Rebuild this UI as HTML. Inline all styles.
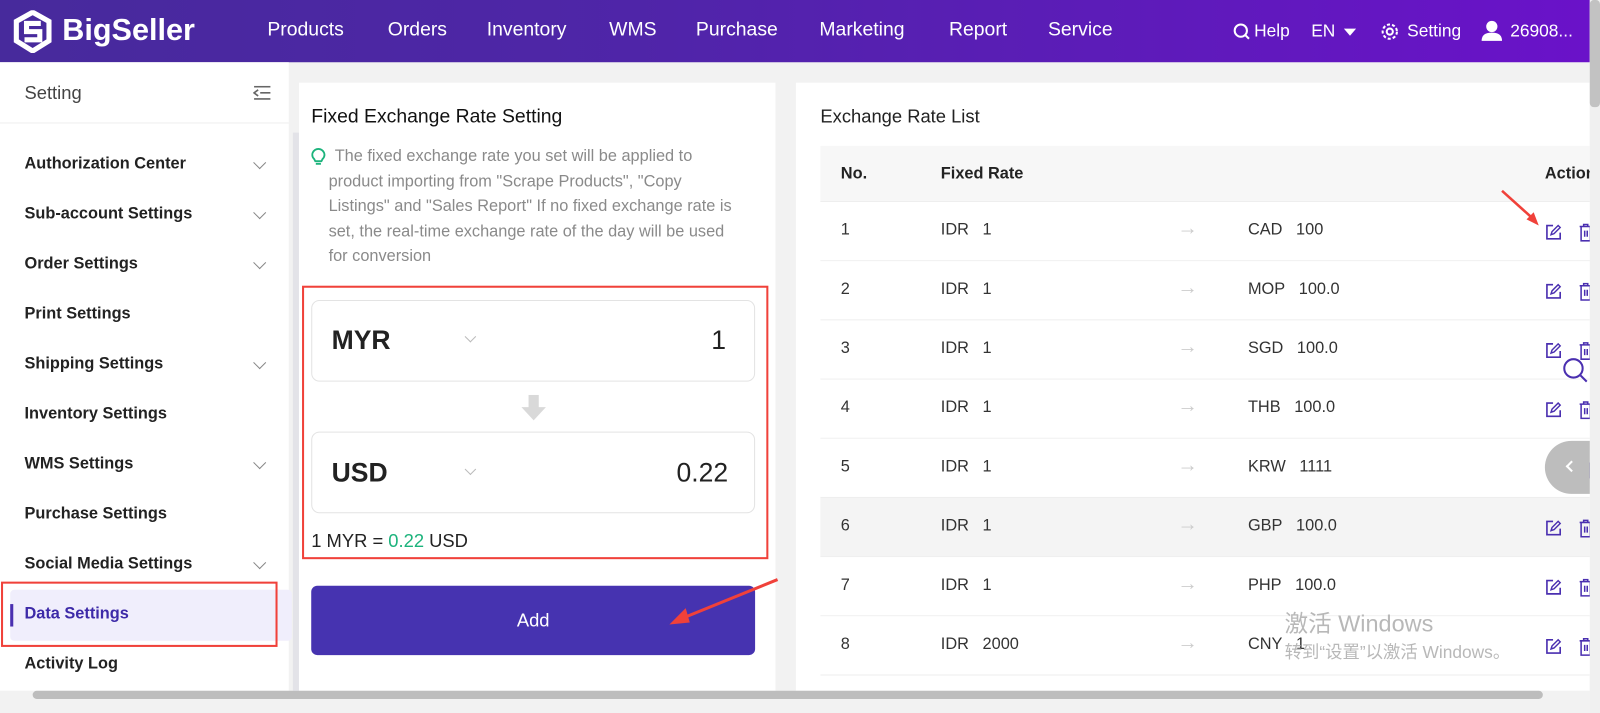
<!DOCTYPE html>
<html><head><meta charset="utf-8"><style>
*{box-sizing:border-box;margin:0;padding:0}
body{width:1600px;height:699px;overflow:hidden;background:#f2f2f2;font-family:"Liberation Sans","Noto Sans CJK SC",sans-serif;position:relative;color:#222}
#w{position:absolute;left:0;top:0;width:1568px;height:685px;transform:scale(1.0204);transform-origin:0 0}
.hdr{position:absolute;left:0;top:0;width:1558px;height:61px;background:linear-gradient(90deg,#472a9c 0%,#4f25a8 40%,#6a12c9 100%);color:#fff}
.hdr .nav{position:absolute;top:19px;font-size:19px}
.abs{position:absolute}
.side{position:absolute;left:0;top:61px;width:283px;height:616px;background:#fff}
.side .it{position:absolute;left:24px;font-size:16px;font-weight:bold;color:#222}
.chev{position:absolute;left:250px;width:9px;height:9px;border-right:1.5px solid #888;border-bottom:1.5px solid #888;transform:rotate(45deg)}
.mid{position:absolute;left:293px;top:81px;width:467px;height:596px;background:#fff}
.right{position:absolute;left:780px;top:81px;width:778px;height:596px;background:#fff}
.row{position:absolute;left:24px;width:754px;height:58px;border-bottom:1px solid #eee;font-size:16px;color:#333}
.row span{position:absolute;top:19px}
.ed{position:absolute;left:710px;top:21px}
.red{border:2px solid #f0413a;position:absolute}
</style></head><body><div id="w">
<div class="hdr">
 <svg class="abs" style="left:12px;top:10px" width="40" height="42" viewBox="0 0 40 42"><path d="M20 2 L36 11 L36 30 L20 40 L4 30 L4 11 Z" fill="none" stroke="#fff" stroke-width="5"/><path d="M28 13 L14 13 L14 21 L27 21 L27 29 L12 29" fill="none" stroke="#fff" stroke-width="5"/></svg>
 <div class="abs" style="left:61px;top:13px;font-size:30px;font-weight:bold">BigSeller</div>
 <div class="nav" style="left:262px">Products</div>
 <div class="nav" style="left:380px">Orders</div>
 <div class="nav" style="left:477px">Inventory</div>
 <div class="nav" style="left:597px">WMS</div>
 <div class="nav" style="left:682px">Purchase</div>
 <div class="nav" style="left:803px">Marketing</div>
 <div class="nav" style="left:930px">Report</div>
 <div class="nav" style="left:1027px">Service</div>
 <svg class="abs" style="left:1208px;top:22px" width="18" height="18" viewBox="0 0 18 18"><circle cx="8" cy="8" r="6" fill="none" stroke="#fff" stroke-width="2"/><path d="M12 12l4 4" stroke="#fff" stroke-width="2"/></svg>
 <div class="abs" style="left:1229px;top:21px;font-size:17px">Help</div>
 <div class="abs" style="left:1285px;top:21px;font-size:17px">EN</div>
 <div class="abs" style="left:1317px;top:28px;border:6px solid transparent;border-top:7px solid #fff"></div>
 <svg class="abs" style="left:1352px;top:21px" width="20" height="20" viewBox="0 0 20 20"><circle cx="10" cy="10" r="3" fill="none" stroke="#fff" stroke-width="2"/><circle cx="10" cy="10" r="7" fill="none" stroke="#fff" stroke-width="2" stroke-dasharray="3 2"/></svg>
 <div class="abs" style="left:1379px;top:21px;font-size:17px">Setting</div>
 <svg class="abs" style="left:1451px;top:19px" width="22" height="22" viewBox="0 0 22 22"><circle cx="11" cy="7" r="5.5" fill="#fff"/><path d="M1 21 Q1 13 11 13 Q21 13 21 21Z" fill="#fff"/></svg>
 <div class="abs" style="left:1480px;top:21px;font-size:17px">26908...</div>
</div>
<div class="side">
 <div class="abs" style="left:24px;top:20px;font-size:18px;color:#444">Setting</div>
 <svg class="abs" style="left:248px;top:23px" width="18" height="14" viewBox="0 0 18 14"><path d="M1 1h16M7 7h10M1 13h16M5 4L1 7l4 3" fill="none" stroke="#666" stroke-width="1.6"/></svg>
 <div class="abs" style="left:0;top:59px;width:283px;height:1px;background:#eee"></div>
 <div class="it" style="top:91px">Authorization Center</div><div class="chev" style="top:94px"></div>
 <div class="it" style="top:140px">Sub-account Settings</div><div class="chev" style="top:143px"></div>
 <div class="it" style="top:189px">Order Settings</div><div class="chev" style="top:192px"></div>
 <div class="it" style="top:238px">Print Settings</div>
 <div class="it" style="top:287px">Shipping Settings</div><div class="chev" style="top:290px"></div>
 <div class="it" style="top:336px">Inventory Settings</div>
 <div class="it" style="top:385px">WMS Settings</div><div class="chev" style="top:388px"></div>
 <div class="it" style="top:434px">Purchase Settings</div>
 <div class="it" style="top:483px">Social Media Settings</div><div class="chev" style="top:486px"></div>
 <div class="abs" style="left:10px;top:517px;width:276px;height:50px;background:#f0eefc;border-radius:4px"></div>
 <div class="abs" style="left:10px;top:531px;width:3px;height:22px;background:#4a2fb0"></div>
 <div class="it" style="top:532px;color:#3d2aa8">Data Settings</div>
 <div class="red" style="left:1px;top:509px;width:271px;height:64px"></div>
 <div class="it" style="top:581px">Activity Log</div>
</div>
<div class="abs" style="left:287px;top:130px;width:6px;height:547px;background:#e3e3e8"></div>
<div class="mid">
 <div class="abs" style="left:12px;top:23px;font-size:19px;color:#111">Fixed Exchange Rate Setting</div>
 <svg class="abs" style="left:12px;top:64px" width="14" height="18" viewBox="0 0 14 18"><path d="M3 11 Q0 8 1.5 4.5 Q3.5 1 7 1 Q10.5 1 12.5 4.5 Q14 8 11 11 L10 13 H4 Z" fill="none" stroke="#1cb37c" stroke-width="1.8"/><path d="M4.5 15.5h5" stroke="#1cb37c" stroke-width="1.8"/></svg>
 <div class="abs" style="left:29px;top:61px;width:400px;font-size:16px;line-height:24.5px;color:#8a8a8a;text-indent:6px">The fixed exchange rate you set will be applied to product importing from "Scrape Products", "Copy Listings" and "Sales Report" If no fixed exchange rate is set, the real-time exchange rate of the day will be used for conversion</div>
 <div class="abs" style="left:12px;top:213px;width:435px;height:80px;border:1px solid #e3e3e3;border-radius:8px"></div>
 <div class="abs" style="left:32px;top:237px;font-size:26px;font-weight:bold;color:#222">MYR</div>
 <div class="abs" style="left:164px;top:245px;width:8px;height:8px;border-right:1px solid #bbb;border-bottom:1px solid #bbb;transform:rotate(45deg)"></div>
 <div class="abs" style="left:404px;top:237px;font-size:26px;color:#222">1</div>
 <svg class="abs" style="left:217px;top:306px" width="26" height="26" viewBox="0 0 26 26"><path d="M8 0h10v12h7L13 25 1 12h7z" fill="#d9d9d9"/></svg>
 <div class="abs" style="left:12px;top:342px;width:435px;height:80px;border:1px solid #e3e3e3;border-radius:8px"></div>
 <div class="abs" style="left:32px;top:367px;font-size:26px;font-weight:bold;color:#222">USD</div>
 <div class="abs" style="left:164px;top:375px;width:8px;height:8px;border-right:1px solid #bbb;border-bottom:1px solid #bbb;transform:rotate(45deg)"></div>
 <div class="abs" style="left:370px;top:367px;font-size:26px;color:#222">0.22</div>
 <div class="abs" style="left:12px;top:439px;font-size:18px;color:#222">1 MYR = <span style="color:#1cb37c">0.22</span> USD</div>
 <div class="red" style="left:3px;top:199px;width:457px;height:268px"></div>
 <div class="abs" style="left:12px;top:493px;width:435px;height:68px;background:#4633b0;border-radius:6px;color:#fff;font-size:18px;text-align:center;line-height:68px">Add</div>
</div>
<svg class="abs" style="left:640px;top:560px" width="130" height="60" viewBox="0 0 130 60"><path d="M122 8 L26 47" stroke="#f0413a" stroke-width="3"/><path d="M16 52 L32 36 L36 50Z" fill="#f0413a"/></svg>
<div class="right">
 <div class="abs" style="left:24px;top:23px;font-size:18px;color:#222">Exchange Rate List</div>
 <div class="abs" style="left:24px;top:62px;width:754px;height:55px;background:#f7f7f7;border-bottom:1px solid #eee;font-size:16px;font-weight:bold;color:#222">
  <span class="abs" style="left:20px;top:19px">No.</span><span class="abs" style="left:118px;top:19px">Fixed Rate</span><span class="abs" style="left:710px;top:19px">Action</span></div>
</div>
<div class="abs" style="left:804px;top:198px;width:754px;height:480px" id="rows"></div>
<div class="abs" style="left:1558px;top:0;width:10px;height:699px;background:#f0f0f0"></div>
<div class="abs" style="left:1558px;top:0;width:10px;height:105px;background:#c2c2c2;border-radius:4px"></div>
<div class="abs" style="left:0;top:677px;width:1558px;height:22px;background:#f2f2f2"></div>
<div class="abs" style="left:32px;top:677px;width:1480px;height:8px;background:#bdbdbd;border-radius:4px"></div>
<div class="abs" style="left:1514px;top:432px;width:44px;height:52px;background:#bdbdbd;border-radius:26px 0 0 26px"></div>
<div class="abs" style="left:1536px;top:453px;width:8px;height:8px;border-left:2px solid #fff;border-bottom:2px solid #fff;transform:rotate(45deg)"></div>
<svg class="abs" style="left:1530px;top:350px" width="28" height="26" viewBox="0 0 28 26"><circle cx="12" cy="11" r="9" fill="none" stroke="#4a2fb0" stroke-width="2"/><path d="M19 18l6 6" stroke="#4a2fb0" stroke-width="2"/></svg>
<svg class="abs" style="left:1470px;top:185px" width="42" height="40" viewBox="0 0 42 40"><path d="M2 2 L32 29" stroke="#f0413a" stroke-width="2.5"/><path d="M38 36 L26 30 L33 23Z" fill="#f0413a"/></svg>
<div class="abs" style="left:1259px;top:592px;font-size:23px;color:#b8b8b8">激活 Windows</div>
<div class="abs" style="left:1259px;top:625px;font-size:17px;color:#b8b8b8">转到“设置”以激活 Windows。</div>
</div>
<script>
var d=[["CAD","100"],["MOP","100.0"],["SGD","100.0"],["THB","100.0"],["KRW","1111"],["GBP","100.0"],["PHP","100.0"],["CNY","1"]];
var h="";d.forEach(function(r,i){var bg=i==5?"#f4f4f4":"#fff";
h+='<div class="row" style="left:0;top:'+(i*58)+'px;background:'+bg+'"><span style="left:20px">'+(i+1)+'</span><span style="left:118px">IDR&nbsp;&nbsp;&nbsp;'+(i==7?'2000':'1')+'</span><span style="left:350px;color:#ccc;font-size:20px;top:15px">→</span><span style="left:419px">'+r[0]+'&nbsp;&nbsp;&nbsp;'+r[1]+'</span>'+
(i==4?'':'<svg class="ed" width="17" height="17" viewBox="0 0 17 17"><path d="M8 2H2v13h13V9" fill="none" stroke="#4a2fb0" stroke-width="1.6"/><path d="M6 11l1-3 6-6 2 2-6 6z" fill="none" stroke="#4a2fb0" stroke-width="1.4"/></svg>')+
'<svg style="position:absolute;left:744px;top:21px" width="12" height="18" viewBox="0 0 12 18"><path d="M0 3h12M4 3V1h4v2M1.5 3v14h9V3M5 7v6M7.5 7v6" fill="none" stroke="#4a2fb0" stroke-width="1.5"/></svg></div>';});
document.getElementById("rows").innerHTML=h;
</script>
</body></html>
